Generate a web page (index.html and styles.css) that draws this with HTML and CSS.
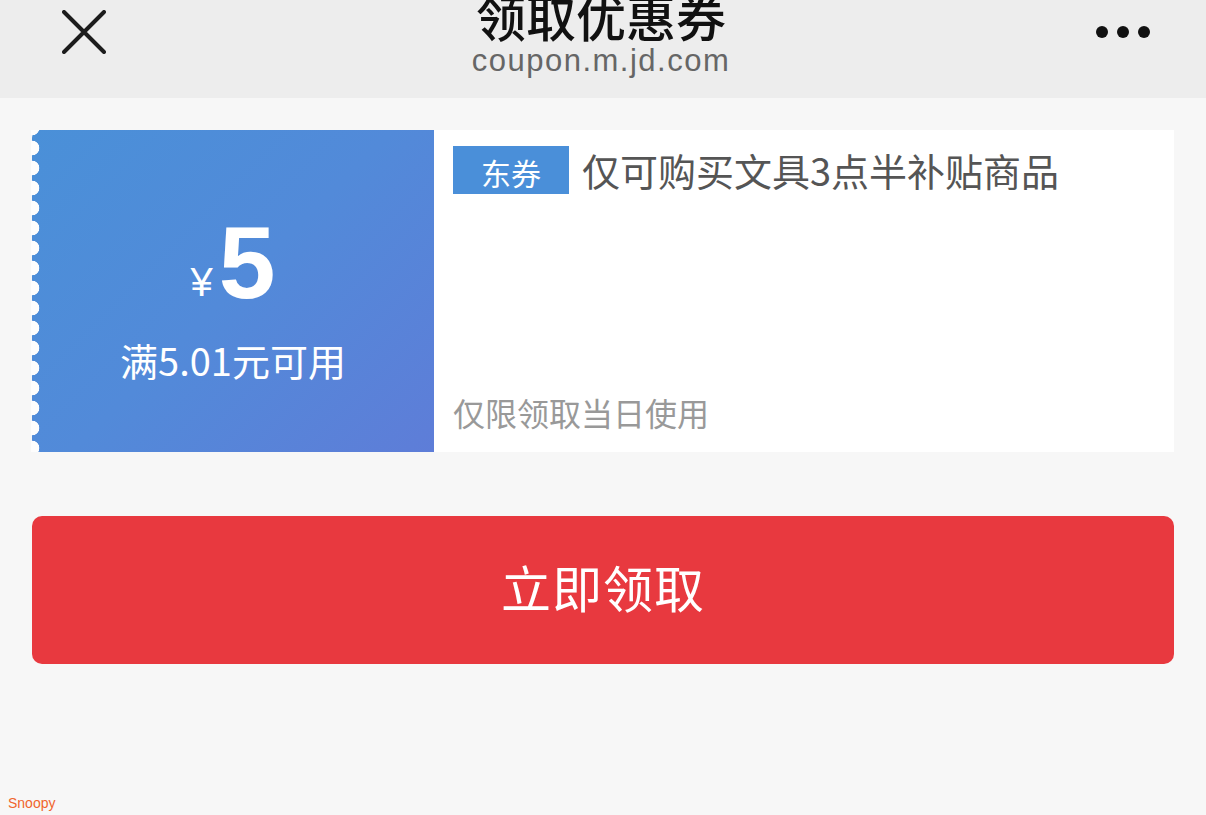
FILE: index.html
```html
<!DOCTYPE html>
<html lang="zh-CN">
<head>
    <meta charset="UTF-8">
    <meta name="viewport" content="width=device-width, initial-scale=1.0">
    <title>领取优惠券</title>
    <link rel="stylesheet" href="styles.css">
</head>
<body>

<div class="page">
    <header class="nav-bar">
        <button class="nav-close" type="button" aria-label="关闭">
            <svg width="44" height="44" viewBox="0 0 44 44">
                <path d="M2 2 L42 42 M42 2 L2 42" stroke="#1c1c1c" stroke-width="4" stroke-linecap="round" fill="none"/>
            </svg>
        </button>
        <div class="nav-title">
            <h1>领取优惠券</h1>
            <p>coupon.m.jd.com</p>
        </div>
        <button class="nav-more" type="button" aria-label="更多">
            <span></span><span></span><span></span>
        </button>
    </header>

    <main class="content">
        <div class="coupon">
            <div class="coupon-left">
                <div class="coupon-price"><span class="yen">¥</span><span class="amount">5</span></div>
                <div class="coupon-limit">满5.01元可用</div>
            </div>
            <div class="coupon-right">
                <div class="coupon-head">
                    <span class="coupon-tag">东券</span>
                    <span class="coupon-name">仅可购买文具3点半补贴商品</span>
                </div>
                <div class="coupon-date">仅限领取当日使用</div>
            </div>
        </div>

        <button class="get-btn" type="button">立即领取</button>
    </main>

    <footer class="mark">Snoopy</footer>
</div>

</body>
</html>
```

FILE: styles.css
```css
body {
    margin: 0;
    background-color: #f7f7f7;
    font-family: "Noto Sans CJK SC", "Liberation Sans", sans-serif;
    overflow: hidden;
}

.page {
    display: flex;
    flex-direction: column;
    height: 815px;
}

button {
    border: none;
    background: none;
    padding: 0;
    cursor: pointer;
    font-family: inherit;
}

/* 상단 바 */
.nav-bar {
    height: 98px;
    background-color: #ededed;
    display: flex;
    align-items: flex-start;
    justify-content: space-between;
    padding: 0 56px 0 62px;
    overflow: hidden;
}

.nav-close {
    margin-top: 10px;
    width: 44px;
    height: 44px;
    display: flex;
}

.nav-title {
    text-align: center;
    margin-top: -11px;
}

.nav-title h1 {
    margin: 0;
    font-size: 50px;
    line-height: 52px;
    font-weight: 500;
    color: #111;
}

.nav-title p {
    margin: 0;
    font-family: "Liberation Sans", sans-serif;
    font-size: 31px;
    line-height: 40px;
    letter-spacing: 1.5px;
    color: #666;
}

.nav-more {
    margin-top: 26px;
    display: flex;
    gap: 9px;
}

.nav-more span {
    width: 12px;
    height: 12px;
    border-radius: 50%;
    background-color: #111;
}

/* 본문 */
.content {
    padding: 32px 32px 0;
}

.coupon {
    display: flex;
    height: 322px;
}

.coupon-left {
    position: relative;
    width: 402px;
    border-radius: 8px 0 0 8px;
    background: linear-gradient(135deg, #4a90d8 0%, #528ad9 50%, #5e7dd8 100%);
    color: #fff;
    display: flex;
    flex-direction: column;
    align-items: center;
    justify-content: center;
}

.coupon-left::before {
    content: '';
    position: absolute;
    left: -1px;
    top: 0;
    bottom: 0;
    width: 9px;
    background: radial-gradient(circle at 1px 10px, #fdfdfd 7px, transparent 7.6px) 0 8px / 9px 20px repeat-y;
}

.coupon-price {
    display: flex;
    align-items: baseline;
    margin-top: 11px;
}

.yen {
    font-family: "Liberation Sans", sans-serif;
    font-size: 40px;
    margin-right: 6px;
    position: relative;
    top: -2px;
}

.amount {
    font-family: "Liberation Sans", sans-serif;
    font-size: 102px;
    font-weight: bold;
    line-height: 104px;
}

.coupon-limit {
    font-size: 38px;
    margin-top: 23px;
    line-height: 44px;
}

.coupon-right {
    flex: 1;
    background-color: #fff;
    padding: 16px 19px 20px;
    display: flex;
    flex-direction: column;
    justify-content: space-between;
}

.coupon-head {
    display: flex;
    align-items: center;
}

.coupon-tag {
    width: 116px;
    height: 48px;
    background-color: #4a8fd9;
    color: #fff;
    font-size: 30px;
    line-height: 52px;
    text-align: center;
    margin-right: 13px;
}

.coupon-name {
    font-size: 38px;
    color: #555;
    line-height: 48px;
}

.coupon-date {
    font-size: 32px;
    color: #999;
    line-height: 40px;
}

.get-btn {
    display: block;
    width: 100%;
    height: 148px;
    margin-top: 64px;
    padding-bottom: 8px;
    background-color: #e8393f;
    border-radius: 10px;
    color: #fff;
    font-size: 50px;
    letter-spacing: 1px;
}

.mark {
    margin-top: auto;
    padding: 0 0 4px 8px;
    font-family: "Liberation Sans", sans-serif;
    font-size: 14px;
    color: #f0652d;
}
```
